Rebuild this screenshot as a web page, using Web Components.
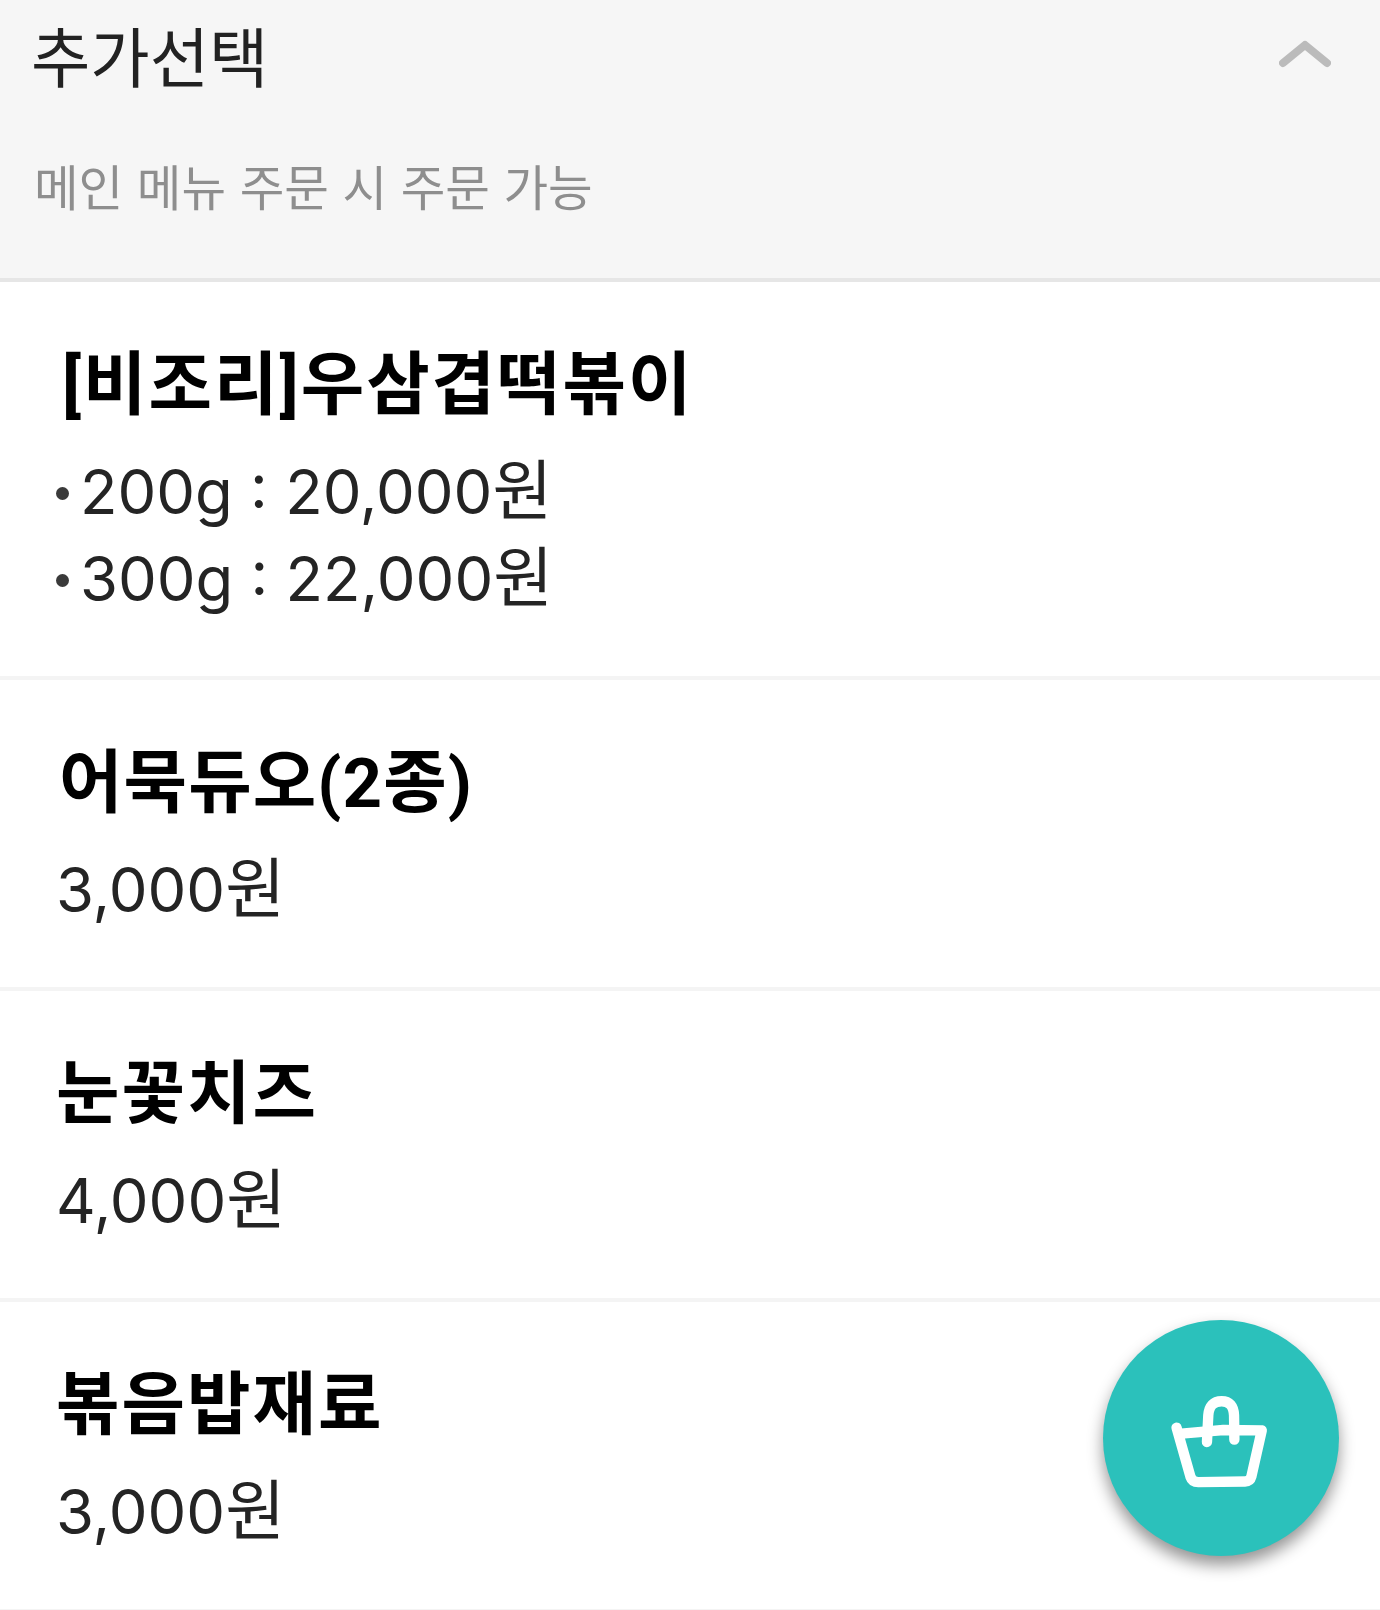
<!DOCTYPE html>
<html lang="ko">
<head>
<meta charset="utf-8">
<title>추가선택</title>
<style>
html, body { margin: 0; padding: 0; background: #fff; }
body { width: 1380px; height: 1610px; overflow: hidden; position: relative;
  font-family: Inter, "Noto Sans CJK KR", sans-serif; }
</style>
</head>
<body>
<option-header title="추가선택" note="메인 메뉴 주문 시 주문 가능"></option-header>
<option-item name="[비조리]우삼겹떡볶이" style="--row-h:398px;--name-x:6px;">
  <price-line bullet>200g : 20,000<won-unit>원</won-unit></price-line>
  <price-line bullet>300g : 22,000<won-unit>원</won-unit></price-line>
</option-item>
<option-item name="어묵듀오(2종)" style="--name-x:3px;--name-ls:1.1px;">
  <price-line>3,000<won-unit>원</won-unit></price-line>
</option-item>
<option-item name="눈꽃치즈">
  <price-line>4,000<won-unit>원</won-unit></price-line>
</option-item>
<option-item name="볶음밥재료">
  <price-line>3,000<won-unit>원</won-unit></price-line>
</option-item>
<cart-fab></cart-fab>

<script>
class OptionHeader extends HTMLElement {
    connectedCallback() {
        this.attachShadow({ mode: 'open' });
        this.shadowRoot.innerHTML = `
        <style>
            :host {
                display: block;
                height: 278px;
                background: #f6f6f6;
                border-bottom: 4px solid #e6e6e6;
                padding: 0 49px 0 31px;
            }
            .top {
                display: flex;
                justify-content: space-between;
                height: 114px;
            }
            .title {
                font-family: "Noto Sans CJK KR", sans-serif;
                font-size: 64.5px;
                line-height: 108px;
                color: #222;
            }
            svg { margin-top: 36px; }
            .note {
                margin-top: 35px;
                padding-left: 3px;
                font-family: "Noto Sans CJK KR", sans-serif;
                font-size: 48.5px;
                line-height: 72px;
                color: #8e8e8e;
            }
        </style>
        <div class="top">
            <div class="title">${this.getAttribute('title')}</div>
            <svg width="52" height="36" viewBox="0 0 52 36">
                <path d="M4 27 L26 9 L48 27" fill="none" stroke="#bbb" stroke-width="8" stroke-linecap="round" stroke-linejoin="round"/>
            </svg>
        </div>
        <div class="note">${this.getAttribute('note')}</div>
        `;
    }
}

class OptionItem extends HTMLElement {
    connectedCallback() {
        this.attachShadow({ mode: 'open' });
        this.shadowRoot.innerHTML = `
        <style>
            :host {
                display: block;
                box-sizing: border-box;
                height: var(--row-h, 311px);
                border-bottom: 4px solid #f4f4f4;
                padding: 59px 0 0 56px;
            }
            .name {
                margin-left: var(--name-x, 0px);
                font-family: Roboto, "Noto Sans CJK KR", sans-serif;
                font-size: 69px;
                font-weight: 700;
                line-height: 90px;
                color: #000;
                letter-spacing: var(--name-ls, 2px);
            }
            .list {
                margin-top: 11px;
            }
        </style>
        <div class="name">${this.getAttribute('name')}</div>
        <div class="list"><slot></slot></div>
        `;
    }
}

class PriceLine extends HTMLElement {
    connectedCallback() {
        this.attachShadow({ mode: 'open' });
        const dot = this.hasAttribute('bullet') ? '<span class="dot"></span>' : '';
        this.shadowRoot.innerHTML = `
        <style>
            :host {
                display: flex;
                align-items: center;
                height: 87px;
                font-size: 61.5px;
                color: #242424;
                white-space: nowrap;
            }
            .dot {
                width: 13px;
                height: 13px;
                margin-top: 16px;
                border-radius: 50%;
                background: #3a3a3a;
                margin-right: 11px;
            }
        </style>
        ${dot}<span><slot></slot></span>
        `;
    }
}

class WonUnit extends HTMLElement {
    connectedCallback() {
        this.attachShadow({ mode: 'open' });
        this.shadowRoot.innerHTML = `<style>
            :host {
                font-family: "Noto Sans CJK KR", sans-serif;
                font-size: 65px;
            }
        </style><slot></slot>`;
    }
}

class CartFab extends HTMLElement {
    connectedCallback() {
        this.attachShadow({ mode: 'open' });
        this.shadowRoot.innerHTML = `
        <style>
            :host {
                position: absolute;
                left: 1103px;
                top: 1320px;
                width: 236px;
                height: 236px;
                border-radius: 50%;
                background: #2bc1bb;
                box-shadow: 0 9px 16px rgba(0,0,0,0.42);
            }
            svg { display: block; }
        </style>
        <svg width="236" height="236" viewBox="70 90 706 706">
            <path d="M290 412 L332 560 Q337 575 355 575 L495 573 Q510 573 514 558 L545 420 L430 419 L305 430" fill="none" stroke="#fff" stroke-width="31" stroke-linecap="round" stroke-linejoin="round"/>
            <path d="M381 455 L385 375 Q388 333 425 333 Q460 333 462 375 L463 448" fill="none" stroke="#fff" stroke-width="31" stroke-linecap="round" stroke-linejoin="round"/>
        </svg>
        `;
    }
}

customElements.define('option-header', OptionHeader);
customElements.define('option-item', OptionItem);
customElements.define('price-line', PriceLine);
customElements.define('won-unit', WonUnit);
customElements.define('cart-fab', CartFab);
</script>
</body>
</html>
